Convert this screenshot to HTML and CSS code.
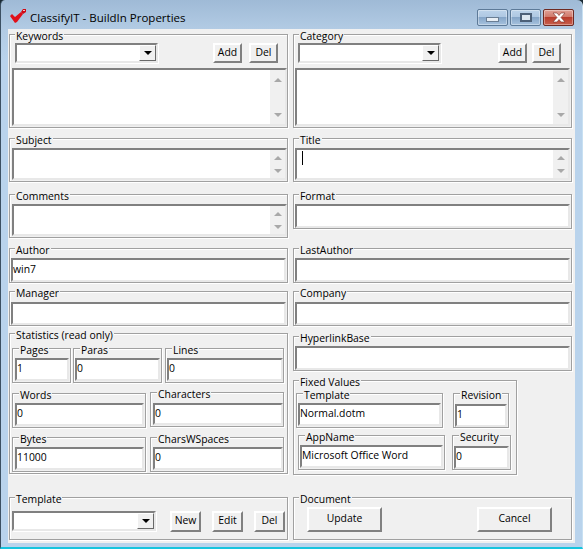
FILE: index.html
```html
<!DOCTYPE html>
<html lang="en">
<head>
<meta charset="utf-8">
<title>ClassifyIT - BuildIn Properties</title>
<link rel="stylesheet" href="styles.css">
</head>
<body>
<div class="window">
  <header class="titlebar">
    <svg class="app-icon" width="18" height="16" viewBox="0 0 18 16"><path d="M0 7 L2 5 L5 8 L11 3 L13 5 L7 13 L5 14 Z" fill="#e0101a"/><path d="M11 3 L13 0 H16 V3 L13 5 Z" fill="#d00a14"/><rect x="13" y="1" width="2" height="1" fill="#f8c0c0"/></svg>
    <span class="title">ClassifyIT - BuildIn Properties</span>
    <div class="controls">
      <div class="ctl"><span class="glyph-min"></span></div>
      <div class="ctl"><span class="glyph-max"></span></div>
      <div class="ctl ctl-close"><svg width="16" height="11" viewBox="0 0 16 11"><path d="M2 1 H6 L8 3.5 L10 1 H14 L10 5.5 L14 10 H10 L8 7.5 L6 10 H2 L6 5.5 Z" fill="#fff" stroke="#7a3028" stroke-width=".6"/></svg></div>
    </div>
  </header>
  <main class="client">
    <div class="col">
      <section class="group top-list">
        <span class="label">Keywords</span>
        <div class="combo-row">
          <div class="combo w143"><span class="drop"><i class="down-black"></i></span></div>
          <button class="btn add-l">Add</button><button class="btn del-l">Del</button>
        </div>
        <div class="memo tall"><div class="sb"><i class="up"></i><i class="down"></i></div></div>
      </section>
      <section class="group mid-memo">
        <span class="label">Subject</span>
        <div class="memo short"><div class="sb"><i class="up"></i><i class="down"></i></div></div>
      </section>
      <section class="group comments">
        <span class="label">Comments</span>
        <div class="memo short"><div class="sb"><i class="up"></i><i class="down"></i></div></div>
      </section>
      <section class="group single after8">
        <span class="label">Author</span>
        <input class="field wide h24 mt6" value="win7" readonly>
      </section>
      <section class="group single after7">
        <span class="label">Manager</span>
        <input class="field wide h23 mt7" readonly>
      </section>
      <section class="group stats">
        <span class="label">Statistics (read only)</span>
        <div class="row row-a">
          <div class="sub w59"><span class="label">Pages</span><input class="field w54 ml2 h23 mt6" value="1" readonly></div>
          <div class="sub w89 ml2"><span class="label">Paras</span><input class="field w85 ml1 h23 mt6" value="0" readonly></div>
          <div class="sub w119 ml3"><span class="label">Lines</span><input class="field w116 ml1 h23 mt6" value="0" readonly></div>
        </div>
        <div class="row row-b">
          <div class="sub w134 nudge"><span class="label">Words</span><input class="field w129 ml2 h23 mt6" value="0" readonly></div>
          <div class="sub w134 ml4"><span class="label">Characters</span><input class="field w130 ml2 h22 mt7" value="0" readonly></div>
        </div>
        <div class="row row-b">
          <div class="sub w134"><span class="label">Bytes</span><input class="field w129 ml2 h23 mt6" value="11000" readonly></div>
          <div class="sub w134 ml4"><span class="label">CharsWSpaces</span><input class="field w130 ml2 h23 mt6" value="0" readonly></div>
        </div>
      </section>
      <section class="group bottom">
        <span class="label">Template</span>
        <div class="tpl-row">
          <div class="combo w144"><span class="drop"><i class="down-black"></i></span></div>
          <button class="btn small first">New</button><button class="btn small next">Edit</button><button class="btn small next">Del</button>
        </div>
      </section>
    </div>
    <div class="col col-right">
      <section class="group top-list">
        <span class="label">Category</span>
        <div class="combo-row">
          <div class="combo w143"><span class="drop"><i class="down-black"></i></span></div>
          <button class="btn add-r">Add</button><button class="btn del-r">Del</button>
        </div>
        <div class="memo tall"><div class="sb"><i class="up"></i><i class="down"></i></div></div>
      </section>
      <section class="group mid-memo">
        <span class="label">Title</span>
        <div class="memo short"><span class="caret"></span><div class="sb"><i class="up"></i><i class="down"></i></div></div>
      </section>
      <section class="group format">
        <span class="label">Format</span>
        <input class="field wide h24 mt6" readonly>
      </section>
      <section class="group single after8">
        <span class="label">LastAuthor</span>
        <input class="field wide h24 mt6" readonly>
      </section>
      <section class="group single after10">
        <span class="label">Company</span>
        <input class="field wide h23 mt7" readonly>
      </section>
      <section class="group single after9">
        <span class="label">HyperlinkBase</span>
        <input class="field wide h24 mt6" readonly>
      </section>
      <section class="group fixed">
        <span class="label">Fixed Values</span>
        <div class="row row-c">
          <div class="sub w147"><span class="label">Template</span><input class="field w143 ml1 h23 mt6" value="Normal.dotm" readonly></div>
          <div class="sub w56 ml10"><span class="label">Revision</span><input class="field w52 ml1 h23 mt7" value="1" readonly></div>
        </div>
        <div class="row row-d">
          <div class="sub w147"><span class="label">AppName</span><input class="field w143 ml1 h23 mt6" value="Microsoft Office Word" readonly></div>
          <div class="sub w59 ml7"><span class="label">Security</span><input class="field w55 ml1 h23 mt7" value="0" readonly></div>
        </div>
      </section>
      <section class="group bottom">
        <span class="label">Document</span>
        <div class="doc-row">
          <button class="btn big">Update</button><button class="btn big">Cancel</button>
        </div>
      </section>
    </div>
  </main>
</div>
</body>
</html>
```
FILE: styles.css
```css
* { box-sizing: border-box; }
html, body { margin: 0; padding: 0; background: #1a2a35; }
body { width: 583px; height: 549px; overflow: hidden; font: 10.4px/15px "Open Sans", "Noto Sans", sans-serif; color: #000; }
.window {
  width: 583px; height: 549px; display: flex; flex-direction: column;
  border-radius: 5px 6px 0 0; overflow: hidden;
  background: linear-gradient(#9fbad6 0, #b2cbe4 29px, #b9d3ec 60px);
  border-left: 1px solid #3c5062; border-bottom: 2px solid #16c4de; border-right: 1px solid #c8e0f2;
}
.titlebar { height: 29px; flex: none; display: flex; align-items: flex-start; padding-left: 9px; }
.app-icon { margin-top: 9px; flex: none; }
.title { margin: 9px 0 0 2px; font-size: 11.5px; line-height: 17px; color: #000; }
.controls { margin-left: auto; margin-right: 8px; margin-top: 9px; display: flex; gap: 2px; }
.ctl {
  width: 31px; height: 17px; display: flex; align-items: center; justify-content: center;
  border: 1px solid #5d7a98; border-radius: 2px;
  background: linear-gradient(#bcd3ea 0, #afc8e2 45%, #86a6c8 50%, #a6c2de 100%);
  box-shadow: inset 0 0 0 1px rgba(255,255,255,.35);
}
.ctl-close { border-color: #6e2a22; background: linear-gradient(#e0a095 0, #d07a6c 45%, #b83c2c 50%, #c8604e 100%); }
.glyph-min { width: 13px; height: 5px; margin-top: 4px; background: #e8eef4; border: 1px solid #6a7e94; }
.glyph-max { width: 12px; height: 9px; background: #dbe6f0; border: 2px solid #4c6078; }
.client {
  width: 567px; height: 514px; margin-left: 7px; flex: none; background: #f0f0f0;
  display: flex; padding: 5px 0 0 1px; gap: 5px;
}
.col { width: 279px; flex: none; display: flex; flex-direction: column; }
.group, .sub { border: 1px solid #a0a0a0; box-shadow: 1px 1px 0 #fff, inset 1px 1px 0 #fff; flex: none; }
.label { display: block; width: fit-content; margin: -5px 0 0 5px; padding: 0 1px; height: 8px; line-height: 12px; background: #f0f0f0; white-space: nowrap; }
.sub .label { margin-left: 6px; }
.top-list { height: 94px; margin-bottom: 10px; }
.mid-memo { height: 44px; margin-bottom: 12px; }
.comments { height: 44px; margin-bottom: 10px; }
.format { height: 35px; margin-bottom: 19px; }
.single { height: 35px; }
.after8 { margin-bottom: 8px; }
.after7 { margin-bottom: 7px; }
.after10 { margin-bottom: 10px; }
.after9 { margin-bottom: 9px; }
.stats { height: 141px; margin-bottom: 23px; }
.fixed { height: 95px; width: 224px; margin-bottom: 22px; }
.bottom { height: 43px; }
.sub { height: 35px; }
.combo-row { display: flex; margin-top: 5px; height: 20px; padding-left: 5px; }
.col-right .combo-row { padding-left: 4px; }
.tpl-row { display: flex; margin-top: 10px; padding-left: 2px; }
.doc-row { display: flex; margin: 6px 0 0 13px; gap: 95px; }
.combo { height: 20px; border: 2px solid; border-color: #808080 #e8e8e8 #e8e8e8 #808080; background: #fff; display: flex; justify-content: flex-end; flex: none; box-shadow: 1px 1px 0 #fff; }
.w143 { width: 143px; }
.w144 { width: 144px; height: 20px; }
.drop { width: 17px; height: 16px; background: #f0f0f0; border: 1px solid; border-color: #fff #696969 #696969 #fff; display: flex; align-items: center; justify-content: center; }
.down-black { width: 0; height: 0; border: 4px solid transparent; border-top: 4px solid #000; border-bottom: 0; }
.btn { padding: 0 0 2px; font: inherit; color: #000; background: #f0f0f0; border: 2px solid; border-color: #fff #808080 #808080 #fff; height: 20px; flex: none; }
.add-l { width: 29px; margin-left: 55px; }
.del-l { width: 29px; margin-left: 7px; }
.add-r { width: 29px; margin-left: 57px; }
.del-r { width: 29px; margin-left: 5px; }
.small { width: 31px; height: 21px; }
.first { margin-left: 14px; }
.next { margin-left: 11px; }
.big { width: 75px; height: 25px; }
.memo { position: relative; width: 275px; margin-left: 2px; background: #fff; border: 2px solid; border-color: #808080 #e8e8e8 #e8e8e8 #808080; display: flex; justify-content: flex-end; }
.col-right .memo { margin-left: 1px; }
.tall { height: 58px; margin-top: 5px; }
.short { height: 32px; margin-top: 6px; }
.sb { width: 15px; background: #f0f0f0; display: flex; flex-direction: column; justify-content: space-between; align-items: center; padding: 8px 0 7px; }
.short .sb { padding: 6px 0 5px; }
.up { width: 0; height: 0; border: 4px solid transparent; border-bottom: 4px solid #a8a8a8; border-top: 0; }
.down { width: 0; height: 0; border: 4px solid transparent; border-top: 4px solid #a8a8a8; border-bottom: 0; }
.caret { position: absolute; left: 5px; top: 1px; width: 1px; height: 14px; background: #000; }
.field { display: block; font: inherit; color: #000; margin: 0; padding: 0 0 3px; background: #fff; border: 2px solid; border-color: #808080 #e8e8e8 #e8e8e8 #808080; border-radius: 0; outline: none; }
.wide { width: 275px; margin-left: 1px; }
.h22 { height: 22px; } .h23 { height: 23px; } .h24 { height: 24px; }
.mt6 { margin-top: 6px; } .mt7 { margin-top: 7px; }
.ml1 { margin-left: 1px; } .ml2 { margin-left: 2px; } .ml3 { margin-left: 3px; } .ml4 { margin-left: 4px; } .ml7 { margin-left: 7px; } .ml10 { margin-left: 10px; }
.w52 { width: 52px; } .w54 { width: 54px; } .w55 { width: 55px; } .w56 { width: 56px; } .w59 { width: 59px; } .w85 { width: 85px; } .w89 { width: 89px; } .w116 { width: 116px; } .w119 { width: 119px; } .w129 { width: 129px; } .w130 { width: 130px; } .w134 { width: 134px; } .w147 { width: 147px; }
.row { display: flex; align-items: flex-start; padding-left: 2px; }
.row-a { margin-top: 11px; }
.row-b { margin-top: 9px; height: 36px; }
.row-b + .row-b { margin-top: 9px; height: 35px; }
.nudge { margin-top: 1px; }
.row-c { margin-top: 9px; }
.row-d { margin-top: 7px; padding-left: 4px; }
```
